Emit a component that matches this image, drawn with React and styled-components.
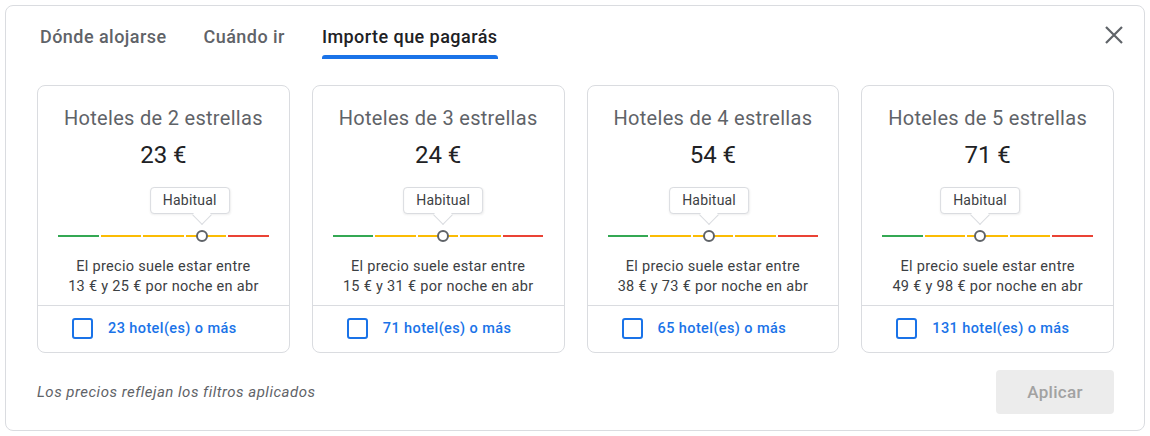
import React from 'react';
import styled, { createGlobalStyle } from 'styled-components';

const GlobalStyle = createGlobalStyle`
  html, body {
    margin: 0;
    padding: 0;
    background: #fff;
    font-family: Roboto, 'Noto Sans', Arial, sans-serif;
  }
`;

const Dialog = styled.div`
  box-sizing: border-box;
  margin: 5px;
  width: 1140px;
  height: 426px;
  border: 1px solid #dadce0;
  border-radius: 8px;
  background: #fff;
  display: flex;
  flex-direction: column;
`;

const Header = styled.div`
  display: flex;
  justify-content: space-between;
  align-items: flex-start;
  padding: 0 15px 0 34px;
`;

const Tabs = styled.div`
  display: flex;
  gap: 37px;
`;

const Tab = styled.div`
  position: relative;
  padding: 19px 0 10px;
  line-height: 24px;
  font-size: 18px;
  font-weight: 500;
  color: ${p => (p.$active ? '#202124' : '#5f6368')};
  letter-spacing: 0.45px;

  &::after {
    content: '';
    display: ${p => (p.$active ? 'block' : 'none')};
    position: absolute;
    left: 0;
    right: 0;
    bottom: 0;
    height: 4px;
    border-radius: 3px 3px 0 0;
    background: #1a73e8;
  }
`;

const Close = styled.button`
  margin-top: 14px;
  width: 30px;
  height: 30px;
  padding: 0;
  border: none;
  background: none;
  display: flex;
  align-items: center;
  justify-content: center;
  cursor: pointer;
`;

const Cards = styled.div`
  display: grid;
  grid-template-columns: repeat(4, 1fr);
  gap: 22px;
  padding: 26px 30px 0 31px;
`;

const Card = styled.div`
  box-sizing: border-box;
  height: 268px;
  border: 1px solid #dadce0;
  border-radius: 8px;
  display: flex;
  flex-direction: column;
`;

const Title = styled.div`
  margin-top: 20px;
  text-align: center;
  font-size: 20px;
  line-height: 24px;
  letter-spacing: 0.3px;
  color: #5f6368;
`;

const Price = styled.div`
  margin-top: 11px;
  text-align: center;
  font-size: 24px;
  line-height: 28px;
  color: #202124;
`;

const Slider = styled.div`
  position: relative;
  margin: 18px 20px 0;
  height: 60px;
`;

const Track = styled.div`
  position: absolute;
  left: 0;
  right: 0;
  top: 48px;
  display: flex;
  gap: 2px;
`;

const Segment = styled.div`
  flex: 1;
  height: 2px;
  background: ${p => p.$color};
`;

const Knob = styled.div`
  position: absolute;
  top: 43px;
  width: 8px;
  height: 8px;
  margin-left: -6px;
  border: 2px solid #5f6368;
  border-radius: 50%;
  background: #fff;
`;

const Tip = styled.div`
  position: absolute;
  top: 0;
  transform: translateX(calc(-50% + ${p => p.$shift}px));
  box-sizing: border-box;
  height: 27px;
  padding: 0 12px;
  border: 1px solid #dadce0;
  border-radius: 4px;
  background: #fff;
  font-size: 14px;
  line-height: 25px;
  letter-spacing: 0.2px;
  color: #3c4043;
  white-space: nowrap;
  box-shadow: 0 1px 2px rgba(60, 64, 67, 0.08);
`;

const Pointer = styled.div`
  position: absolute;
  top: 21px;
  width: 14px;
  height: 14px;
  margin-left: -7px;
  box-sizing: border-box;
  border-right: 1px solid #dadce0;
  border-bottom: 1px solid #dadce0;
  background: #fff;
  transform: rotate(45deg);
`;

const Range = styled.div`
  margin-top: 10px;
  text-align: center;
  font-size: 14.5px;
  line-height: 20px;
  letter-spacing: 0.3px;
  color: #3c4043;
`;

const Choice = styled.label`
  margin-top: 8px;
  border-top: 1px solid #dadce0;
  flex: 1;
  display: flex;
  align-items: center;
  gap: 15px;
  padding: 0 0 2px 34px;
  font-size: 14.5px;
  font-weight: 500;
  letter-spacing: 0.4px;
  color: #1a73e8;
  cursor: pointer;
`;

const Box = styled.span`
  box-sizing: border-box;
  width: 21px;
  height: 21px;
  border: 2px solid #1a73e8;
  border-radius: 3px;
`;

const Footer = styled.div`
  flex: 1;
  display: flex;
  align-items: center;
  justify-content: space-between;
  padding: 0 30px 0 31px;
`;

const Note = styled.div`
  font-size: 15px;
  font-style: italic;
  letter-spacing: 0.5px;
  color: #5f6368;
`;

const Apply = styled.button`
  width: 118px;
  height: 44px;
  border: none;
  border-radius: 4px;
  background: #ececec;
  color: #a2a2a2;
  font-family: Roboto, sans-serif;
  font-size: 17px;
  font-weight: 500;
  letter-spacing: 0.3px;
`;

const colors = ['#34a853', '#fbbc04', '#fbbc04', '#fbbc04', '#ea4335'];

const hotels = [
  { stars: 2, price: '23 €', low: 13, high: 25, pos: 68.2, shift: -12, count: 23 },
  { stars: 3, price: '24 €', low: 15, high: 31, pos: 52.4, shift: 0, count: 71 },
  { stars: 4, price: '54 €', low: 38, high: 73, pos: 48.2, shift: 0, count: 65 },
  { stars: 5, price: '71 €', low: 49, high: 98, pos: 46.4, shift: 0, count: 131 },
];

export default function App() {
  return (
    <>
      <GlobalStyle />
      <Dialog>
        <Header>
          <Tabs>
            <Tab>Dónde alojarse</Tab>
            <Tab>Cuándo ir</Tab>
            <Tab $active>Importe que pagarás</Tab>
          </Tabs>
          <Close aria-label="Cerrar">
            <svg width="18" height="18" viewBox="0 0 18 18">
              <path d="M1 1L17 17M17 1L1 17" stroke="#5f6368" strokeWidth="2.2" />
            </svg>
          </Close>
        </Header>
        <Cards>
          {hotels.map(h => (
            <Card key={h.stars}>
              <Title>Hoteles de {h.stars} estrellas</Title>
              <Price>{h.price}</Price>
              <Slider>
                <Tip $shift={h.shift} style={{ left: `${h.pos}%` }}>Habitual</Tip>
                <Pointer style={{ left: `${h.pos}%` }} />
                <Track>
                  {colors.map((c, i) => (
                    <Segment key={i} $color={c} />
                  ))}
                </Track>
                <Knob style={{ left: `${h.pos}%` }} />
              </Slider>
              <Range>
                El precio suele estar entre
                <br />
                {h.low} € y {h.high} € por noche en abr
              </Range>
              <Choice>
                <Box />
                {h.count} hotel(es) o más
              </Choice>
            </Card>
          ))}
        </Cards>
        <Footer>
          <Note>Los precios reflejan los filtros aplicados</Note>
          <Apply disabled>Aplicar</Apply>
        </Footer>
      </Dialog>
    </>
  );
}
